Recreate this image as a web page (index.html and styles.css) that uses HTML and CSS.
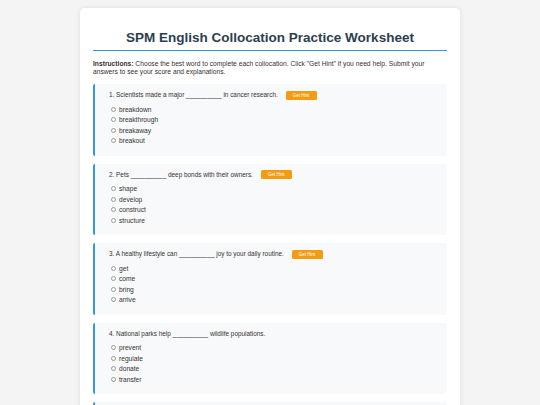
FILE: index.html
```html
<!DOCTYPE html>
<html lang="en">
<head>
<meta charset="utf-8">
<title>SPM English Collocation Practice Worksheet</title>
<link rel="stylesheet" href="styles.css">
</head>
<body>
<div class="card">
  <h1 class="title">SPM English Collocation Practice Worksheet</h1>
  <p class="instructions"><strong>Instructions:</strong> Choose the best word to complete each collocation. Click "Get Hint" if you need help. Submit your answers to see your score and explanations.</p>

  <div class="question">
    <div class="q-text">1. Scientists made a major __________ in cancer research. <button class="hint">Get Hint</button></div>
    <label class="option"><input type="radio" name="q1"> breakdown</label>
    <label class="option"><input type="radio" name="q1"> breakthrough</label>
    <label class="option"><input type="radio" name="q1"> breakaway</label>
    <label class="option"><input type="radio" name="q1"> breakout</label>
  </div>

  <div class="question">
    <div class="q-text">2. Pets __________ deep bonds with their owners. <button class="hint">Get Hint</button></div>
    <label class="option"><input type="radio" name="q2"> shape</label>
    <label class="option"><input type="radio" name="q2"> develop</label>
    <label class="option"><input type="radio" name="q2"> construct</label>
    <label class="option"><input type="radio" name="q2"> structure</label>
  </div>

  <div class="question">
    <div class="q-text">3. A healthy lifestyle can __________ joy to your daily routine. <button class="hint">Get Hint</button></div>
    <label class="option"><input type="radio" name="q3"> get</label>
    <label class="option"><input type="radio" name="q3"> come</label>
    <label class="option"><input type="radio" name="q3"> bring</label>
    <label class="option"><input type="radio" name="q3"> arrive</label>
  </div>

  <div class="question">
    <div class="q-text">4. National parks help __________ wildlife populations.</div>
    <label class="option"><input type="radio" name="q4"> prevent</label>
    <label class="option"><input type="radio" name="q4"> regulate</label>
    <label class="option"><input type="radio" name="q4"> donate</label>
    <label class="option"><input type="radio" name="q4"> transfer</label>
  </div>

  <div class="question">
    <div class="q-text">5. Students should __________ attention in class. <button class="hint">Get Hint</button></div>
    <label class="option"><input type="radio" name="q5"> give</label>
    <label class="option"><input type="radio" name="q5"> pay</label>
    <label class="option"><input type="radio" name="q5"> take</label>
    <label class="option"><input type="radio" name="q5"> make</label>
  </div>
</div>
</body>
</html>
```

FILE: styles.css
```css
html, body {
  margin: 0;
  padding: 0;
}
body {
  background: #f4f4f4;
  font-family: "Liberation Sans", Arial, sans-serif;
  color: #333;
  padding: 8px 0;
}
.card {
  width: 354px;
  margin: 0 auto;
  background: #fff;
  border-radius: 5px;
  box-shadow: 0 0 5px rgba(0, 0, 0, 0.1);
  padding: 19.5px 13px 13px;
}
.title {
  margin: 0;
  font-size: 13.5px;
  line-height: 19px;
  font-weight: bold;
  color: #2c3e50;
  text-align: center;
  padding-bottom: 3.5px;
  border-bottom: 1px solid #3498db;
}
.instructions {
  margin: 9.25px 0 8.25px;
  font-size: 6.7px;
  line-height: 7.75px;
}
.question {
  background: #f8f9fa;
  border-left: 2px solid #3498db;
  border-radius: 2px;
  padding: 6px 14px 9.5px;
  margin-bottom: 8px;
  font-size: 6.65px;
}
.q-text {
  font-size: 6.4px;
  line-height: 10px;
  margin-bottom: 4px;
  display: flex;
  align-items: center;
  white-space: pre;
}
.hint {
  margin-left: 6px;
  background: #f39c12;
  color: #fff;
  border: none;
  border-radius: 1.5px;
  font-family: "Liberation Sans", Arial, sans-serif;
  font-size: 4.5px;
  height: 9px;
  width: 31px;
  padding: 0;
}
.option {
  display: flex;
  align-items: center;
  height: 10.5px;
  padding-left: 1.5px;
}
.option input {
  appearance: none;
  -webkit-appearance: none;
  width: 5px;
  height: 5px;
  margin: 0 3.5px 0 0;
  border: 0.5px solid #999;
  border-radius: 50%;
  background: #fff;
}
```
